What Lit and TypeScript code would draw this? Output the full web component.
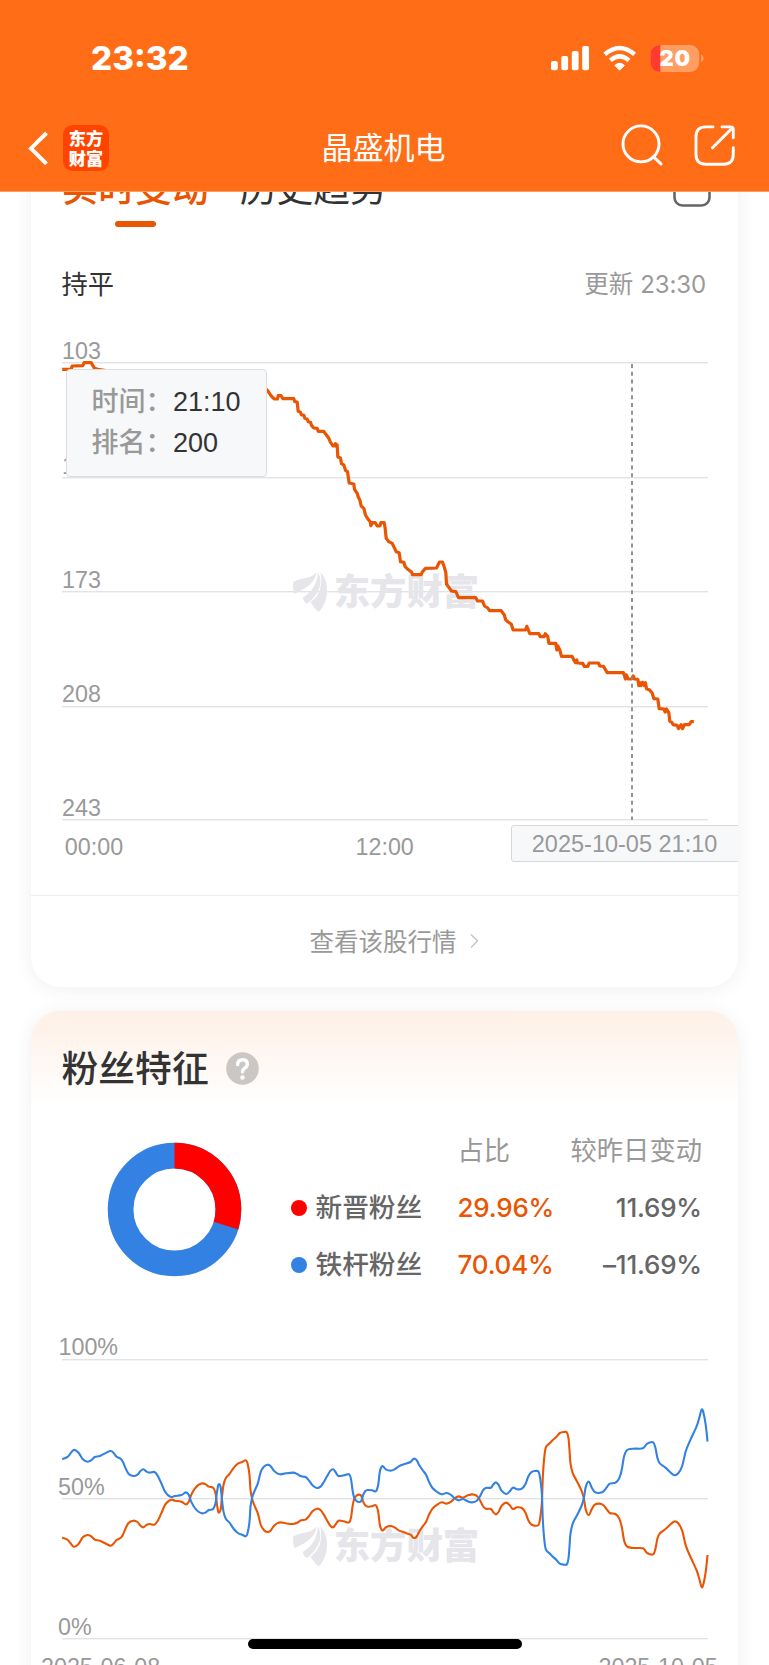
import { LitElement, html, css, svg } from "lit";
import { customElement } from "lit/decorators.js";

type Pt = [number, number];

/* Popularity rank through the day; three plot units per pixel. */
const rankStart: Pt[] = [
  [65,118],[92,118],[95,108],[127,107],[131,98],[152,98],[162,115],[172,118],[250,130],[500,160],[670,170],
  [683,184],[690,195],[697,203],[702,207],[711,207],[713,197],[722,197],[727,206],[760,206],[763,215],[770,216],
  [773,244],[780,247],[782,254],[790,256],[793,265],[800,267],[803,275],[810,277],[813,286],[820,294],[830,295],
  [833,304],[850,304],[856,313],[865,325],[870,337],[878,348],[882,348],[885,341],[890,345],[892,381],[900,384],
  [903,401],[910,405],[915,421],[921,425],[926,459],[940,462],[942,478],[950,490],[953,500],[958,510],[962,528],
  [970,535],[975,555],[983,568],[989,575],[991,587],[996,578],[1004,578],[1010,588],[1018,588],[1021,578],
  [1031,578],[1034,595],[1037,625],[1045,635],[1055,640],[1060,650],[1067,665],[1076,668],
].map(([x, y]) => [x + 120, y + 990] as Pt);

const rankEnd: Pt[] = [
  [0,65],[10,67],[14,80],[22,88],[33,96],[36,104],[62,104],[66,95],[75,85],[108,84],[117,66],[126,66],[131,80],
  [136,98],[138,132],[145,142],[153,153],[166,155],[174,173],[226,173],[231,183],[246,183],[252,198],[262,204],
  [267,212],[302,212],[311,224],[316,240],[323,246],[332,252],[338,270],[375,270],[379,259],[388,281],[415,281],
  [419,290],[431,290],[434,281],[442,290],[445,310],[466,310],[469,330],[472,318],[478,330],[483,349],[515,349],
  [519,358],[525,368],[529,360],[531,369],[547,370],[551,379],[562,379],[566,369],[594,369],[598,378],[609,379],
  [620,398],[669,398],[675,417],[678,405],[683,417],[693,417],[698,408],[702,417],[712,418],[715,437],[719,428],
  [722,437],[726,427],[732,437],[735,428],[738,446],[746,449],[755,459],[760,476],[772,477],[776,506],[790,507],
  [794,516],[798,507],[805,518],[808,544],[814,547],[818,554],[830,556],[834,566],[842,554],[846,566],[852,554],
  [866,554],[872,545],[880,545],
].map(([x, y]) => [x + 1200, y + 1620] as Pt);

const rankPoints = [...rankStart, ...rankEnd].map(([x, y]) => `${x / 3},${(y / 3).toFixed(2)}`).join(" ");

/* Share of loyal fans as a deviation from 50%; new fans are its mirror. */
const share: Pt[] = [
  [185,118],[202,125],[219,145],[234,137],[247,117],[261,110],[272,114],[283,124],[300,128],[329,142],[340,135],
  [348,125],[360,119],[367,110],[374,93],[384,74],[398,67],[411,71],[420,82],[429,87],[438,80],[448,77],[462,79],
  [472,67],[482,46],[493,21],[503,9],[513,4],[523,7],[543,10],[556,18],[565,10],[572,-10],[583,-29],[595,-41],
  [606,-45],[616,-42],[625,-35],[638,-32],[645,-15],[649,15],[653,39],[657,42],[661,31],[664,0],[669,-40],
  [676,-61],[687,-73],[700,-92],[712,-104],[725,-109],[736,-114],[741,-105],[747,-70],[750,-25],[755,2],[762,22],
  [772,45],[781,80],[790,95],[801,101],[810,97],[820,83],[830,75],[840,72],[856,75],[878,77],[890,73],[902,66],
  [915,64],[925,54],[936,39],[949,31],[960,35],[970,49],[980,67],[990,83],[998,87],[1005,79],[1014,67],[1030,69],
  [1046,72],[1052,55],[1056,25],[1061,2],[1068,-8],[1075,-11],[1082,-8],[1088,10],[1094,21],[1102,25],[1115,24],
  [1126,21],[1133,40],[1138,80],[1143,94],[1148,96],[1156,87],[1170,83],[1182,87],[1195,96],[1210,102],
  [1230,109],[1237,117],[1243,119],[1249,114],[1256,100],[1266,85],[1277,70],[1286,48],[1296,31],[1310,19],
  [1324,12],[1338,16],[1352,10],[1363,-1],[1375,-6],[1387,-2],[1402,-9],[1415,-12],[1428,-8],[1438,5],[1447,23],
  [1456,31],[1471,32],[1478,41],[1486,48],[1494,41],[1503,23],[1517,13],[1528,21],[1537,32],[1550,27],[1564,29],
  [1575,43],[1583,65],[1592,78],[1603,82],[1614,80],[1619,60],[1624,15],[1627,-65],[1631,-120],[1636,-153],
  [1646,-164],[1657,-175],[1668,-185],[1678,-196],[1690,-199],[1699,-198],[1704,-180],[1707,-145],[1710,-105],
  [1717,-75],[1730,-50],[1743,-23],[1750,0],[1756,35],[1765,50],[1774,32],[1783,19],[1796,16],[1808,20],
  [1818,32],[1828,44],[1845,47],[1856,60],[1864,87],[1871,127],[1880,145],[1900,149],[1927,150],[1940,164],
  [1958,168],[1965,150],[1971,120],[1978,105],[1995,92],[2020,70],[2033,75],[2045,97],[2056,142],[2070,176],
  [2088,215],[2096,240],[2104,267],[2111,247],[2117,210],[2121,170],
];

function smooth(sign: 1 | -1): string {
  const p = share.map(([x, v]) => [x / 3, (4495 - sign * v) / 3] as Pt);
  let d = `M${p[0][0]},${p[0][1]}`;
  for (let i = 0; i < p.length - 1; i++) {
    const a = p[Math.max(i - 1, 0)], b = p[i], c = p[i + 1], e = p[Math.min(i + 2, p.length - 1)];
    const k = 1 / 6;
    const n = [b[0] + (c[0] - a[0]) * k, b[1] + (c[1] - a[1]) * k, c[0] - (e[0] - b[0]) * k, c[1] - (e[1] - b[1]) * k, c[0], c[1]];
    d += "C" + n.map((v) => v.toFixed(2)).join(",");
  }
  return d;
}

const watermark = (y: number) => svg`
  <g transform="translate(280 ${y})" fill="#e5e5ea">
    <g transform="scale(.33333) translate(0 -378)">
      <path d="M38,410 C60,394 92,402 107,380 C106,408 84,424 42,445 C38,436 37,424 38,410Z"/>
      <path d="M67,456 C94,440 112,412 112,378 C128,408 120,442 80,474 C72,470 68,464 67,456Z"/>
      <path d="M120,380 C149,410 145,468 115,499 C105,492 96,480 90,470 C118,450 127,420 120,380Z"/>
    </g>
    <text x="53.2" y="33.2" class="mark">东方财富</text>
  </g>`;

const grid = (ys: number[]) =>
  ys.map((y) => svg`<rect x="61.5" y=${y} width="646" height="1.4" fill="#e3e3e3"/>`);

@customElement("status-header")
class StatusHeader extends LitElement {
  static styles = css`
    :host { display: block; height: 192px; flex: none; background: #ff6d17; color: #fff; position: relative; z-index: 2;
      border-bottom: 1px solid #ff9d63; box-sizing: border-box; font-family: Inter, "Noto Sans CJK SC", sans-serif; }
    .status { display: flex; align-items: center; height: 115px; box-sizing: border-box; padding: 0 64px 0 91px; }
    .time { font-size: 33.2px; font-weight: 800; flex: 1; line-height: 40px; }
    svg { display: block; flex: none; }
    .num { font: 900 22px Inter, sans-serif; }
    .nav { display: grid; grid-template-columns: 240px 1fr 240px; align-items: center; height: 66px; }
    .left { display: flex; align-items: center; padding-left: 28px; gap: 13px; }
    .logo { width: 46px; height: 46px; box-sizing: border-box; border-radius: 9.5px; background: #ff4400;
      font: 900 17.2px/19.8px "Noto Sans CJK SC", sans-serif; text-align: center; padding-top: 3.2px; }
    .title { text-align: center; font-size: 31px; line-height: 40px; margin-left: -2px; }
    .right { display: flex; justify-content: flex-end; padding-right: 32px; gap: 30px; }
  `;
  render() {
    return html`
      <div class="status">
        <div class="time">23:32</div>
        <svg width="156" height="30" viewBox="549 42 156 30">
          <g fill="#fff">
            <rect x="551" y="60" width="6.8" height="9.3" rx="2"/>
            <rect x="561.3" y="55" width="6.8" height="14.3" rx="2"/>
            <rect x="571.8" y="50" width="6.8" height="19.3" rx="2"/>
            <rect x="582.2" y="45" width="6.8" height="24.3" rx="2"/>
            <path d="M619.6,69.2 L614.9,64.4 Q619.6,60.2 624.4,64.4Z" stroke="#fff" stroke-width="1" stroke-linejoin="round"/>
          </g>
          <g fill="none" stroke="#fff" stroke-width="4.4">
            <path d="M604.8,53.4 Q619.6,40.6 634.6,53.4"/>
            <path d="M610.4,59.4 Q619.6,51.3 629,59.4"/>
          </g>
          <clipPath id="b"><rect x="650.5" y="44" width="48.7" height="27" rx="9"/></clipPath>
          <g clip-path="url(#b)">
            <rect x="650" y="44" width="50" height="27" fill="#ff9d63"/>
            <rect x="650" y="44" width="10.3" height="27" fill="#ff3b30"/>
          </g>
          <path d="M701,53.5 Q703.6,54.5 703.6,57.3 Q703.6,60 701,61Z" fill="#ff9d63"/>
          <text class="num" x="659.6" y="65.2" fill="#fff" textLength="30.6">20</text>
        </svg>
      </div>
      <div class="nav">
        <div class="left">
          <svg width="22" height="36" viewBox="28 130.500 22 36"><path d="M46.500,133.500 L31,148.900 L46.500,164.300" fill="none" stroke="#fff" stroke-width="3.900"/></svg>
          <div class="logo">东方<br>财富</div>
        </div>
        <div class="title">晶盛机电</div>
        <div class="right">
          <svg width="42" height="52" viewBox="621 121.800 42 52" fill="none" stroke="#fff" stroke-width="2.900" stroke-linecap="round">
            <circle cx="641" cy="143.700" r="18"/><path d="M653.600,156.700 L661,163.700"/>
          </svg>
          <svg width="44" height="52" viewBox="693 121.800 44 52" fill="none" stroke="#fff" stroke-width="2.900" stroke-linecap="round" stroke-linejoin="round">
            <path d="M713,126.700 H706 Q696,126.700 696,136.500 V154 Q696,164 706,164 H723.500 Q733.300,164 733.300,154 V147.500"/>
            <path d="M722,126.700 H730.500 Q733.300,126.700 733.300,129.500 V137.500 M732,128 L712.500,147.500"/>
          </svg>
        </div>
      </div>`;
  }
}

@customElement("rank-card")
class RankCard extends LitElement {
  static styles = css`
    :host { display: block; background: #fff; border-radius: 30px; overflow: hidden; position: relative; color: #333; }
    .tabs { display: flex; padding: 24px 27px 0 31px; height: 64px; gap: 31px; font-size: 36.800px; line-height: 50px; }
    .tab { display: flex; flex-direction: column; align-items: center; }
    .on { color: #ea5504; font-weight: 500; }
    .on::after { content: ""; width: 41px; height: 6.500px; border-radius: 3.300px; background: #ea5504; margin-top: 6.500px; }
    .share { margin-left: auto; }
    .meta { display: flex; justify-content: space-between; margin: 37px 31.500px 0 31px; height: 40px; line-height: 40px; font-size: 26.300px; }
    .upd { color: #999; font-size: 24.500px; margin-top: -1.500px; }
    .n { font-size: 24px; letter-spacing: -.1px; }
    .chart { position: relative; height: 590px; }
    svg { display: block; }
    text { font: 23.300px "Liberation Sans", Arial, sans-serif; fill: #999; }
    text.mark { font: 900 36.400px "Noto Sans CJK SC", sans-serif; fill: #e5e5ea; }
    .tip { position: absolute; left: 35.500px; top: 64px; width: 200.500px; height: 108px; box-sizing: border-box; border: 1.400px solid #ddd;
      border-radius: 4px; background: #f7f8fa; padding: 12px 0 0 24.500px; font: 27px/41px "Liberation Sans", "Noto Sans CJK SC", sans-serif; color: #333; }
    .row { display: flex; }
    .k { width: 81.500px; color: #999; font-weight: 500; white-space: nowrap; }
    .tag { position: absolute; right: -6px; top: 520px; width: 232.500px; height: 36.500px; box-sizing: border-box; border: 1.400px solid #d8d8d8;
      border-radius: 3px; background: #f7f8fa; padding-left: 19.800px; color: #999; font: 23.500px/36px "Liberation Sans", sans-serif; }
    .more { border-top: 1.400px solid #eee; height: 92px; display: flex; align-items: center; justify-content: center; gap: 13px;
      color: #999; font-size: 24.500px; padding: 0 0 3px 20px; box-sizing: border-box; }
    .more svg { margin-top: 1px; }
  `;
  render() {
    return html`
      <div class="tabs">
        <div class="tab on">实时变动</div>
        <div class="tab">历史趋势</div>
        <svg class="share" width="38" height="44" viewBox="673 164 38 44" fill="none" stroke="#666" stroke-width="2.600">
          <rect x="674.500" y="170" width="35" height="35.500" rx="8"/>
        </svg>
      </div>
      <div class="meta"><span>持平</span><span class="upd">更新 <span class="n">23:30</span></span></div>
      <div class="chart">
        <svg width="707" height="590" viewBox="30.500 305 707 590">
          ${grid([362, 477, 591, 706, 819])}
          ${watermark(571.7)}
          <polyline points=${rankPoints} fill="none" stroke="#ea5504" stroke-width="3.200" stroke-linejoin="round"/>
          <path d="M631.500,362 V820" stroke="#888" stroke-width="1.800" stroke-dasharray="4 3.800" stroke-dashoffset="-2"/>
          <text x="61.500" y="359.300">103</text>
          <text x="61.500" y="473.600">138</text>
          <text x="61.500" y="587.500">173</text>
          <text x="61.500" y="702">208</text>
          <text x="61.500" y="815.800">243</text>
          <text x="64.300" y="855.300">00:00</text>
          <text x="355" y="855.300">12:00</text>
        </svg>
        <div class="tip">
          <div class="row"><span class="k">时间：</span><span>21:10</span></div>
          <div class="row"><span class="k">排名：</span><span>200</span></div>
        </div>
        <div class="tag">2025-10-05 21:10</div>
      </div>
      <div class="more">查看该股行情
        <svg width="9" height="14" viewBox="0 0 9 14"><path d="M1,.500 L7.500,7 L1,13.500" fill="none" stroke="#c4c4c4" stroke-width="1.400"/></svg>
      </div>`;
  }
}

@customElement("fans-card")
class FansCard extends LitElement {
  static styles = css`
    :host { display: block; background: linear-gradient(#fef0e6, #fff 97px) #fff; border-radius: 30px 30px 0 0; color: #333; height: 700px; }
    .head { display: flex; align-items: center; gap: 17px; height: 110px; padding: 0 31px 1px; box-sizing: border-box; font-size: 36.800px; font-weight: 500; }
    .head svg { margin-top: 5px; }
    svg { display: block; }
    .body { display: flex; height: 172px; padding-left: 76.500px; }
    .donut { margin: 21px 48.500px 0 0; flex: none; }
    .table { display: grid; grid-template-columns: 167px 112px 132.500px; grid-template-rows: 57.500px 56.800px 56.800px; align-items: center; font-size: 26px; color: #666; }
    .h { color: #999; font-size: 26.300px; margin-top: -2px; }
    .r { text-align: right; white-space: nowrap; }
    .name { display: flex; align-items: center; gap: 9px; font-weight: 500; font-size: 26.700px; margin-top: -2px; }
    .dot { width: 16px; height: 16px; border-radius: 50%; background: #f00; margin-top: 5px; }
    .blue { background: #3381e3; }
    .v { font-weight: 500; letter-spacing: -.2px; margin-top: 1px; }
    .hot { color: #ea5504; }
    text { font: 23.300px "Liberation Sans", Arial, sans-serif; fill: #999; }
    text.mark { font: 900 36.400px "Noto Sans CJK SC", sans-serif; fill: #e5e5ea; }
  `;
  render() {
    const r = 53.9, len = 2 * Math.PI * r;
    return html`
      <div class="head">粉丝特征
        <svg width="33" height="33" viewBox="0 0 33 33">
          <circle cx="16.500" cy="16.500" r="16.300" fill="#cbc7c4"/>
          <path d="M11.600,12.600 Q11.900,7.700 16.600,7.700 Q21.300,7.700 21.300,12 Q21.300,14.400 18.700,16.200 Q16.500,17.700 16.500,20" fill="none" stroke="#fff" stroke-width="3.400" stroke-linecap="round"/>
          <circle cx="16.500" cy="25.500" r="2.200" fill="#fff"/>
        </svg>
      </div>
      <div class="body">
        <svg class="donut" width="135" height="135" viewBox="-67.500 -67.500 135 135" fill="none" stroke-width="25.700">
          <circle r=${r} stroke="#3381e3"/>
          <circle r=${r} stroke="#f00" transform="rotate(-90)" stroke-dasharray="${len * 0.298} ${len}"/>
        </svg>
        <div class="table">
          <span></span><span class="h">占比</span><span class="h r">较昨日变动</span>
          <span class="name"><i class="dot"></i>新晋粉丝</span><span class="v hot">29.96%</span><span class="v r">11.69%</span>
          <span class="name"><i class="dot blue"></i>铁杆粉丝</span><span class="v hot">70.04%</span><span class="v r">–11.69%</span>
        </div>
      </div>
      <svg width="707" height="400" viewBox="30.500 1293 707 400">
        ${grid([1359, 1498, 1638])}
        ${watermark(1526)}
        <path d=${smooth(-1)} fill="none" stroke="#ea5504" stroke-width="2.100"/>
        <path d=${smooth(1)} fill="none" stroke="#3381e3" stroke-width="2.100"/>
        <text x="58" y="1354.700">100%</text>
        <text x="57.500" y="1494.700">50%</text>
        <text x="57.500" y="1634.700">0%</text>
        <text x="40.500" y="1674.700">2025-06-08</text>
        <text x="598" y="1674.700">2025-10-05</text>
      </svg>`;
  }
}

@customElement("app-root")
class AppRoot extends LitElement {
  static styles = css`
    :host { display: flex; flex-direction: column; position: relative; height: 1665px; overflow: hidden; background: #fff;
      font-family: Inter, "Noto Sans CJK SC", sans-serif; }
    .list { display: flex; flex-direction: column; gap: 24px; padding: 0 31.500px 0 30.500px; margin-top: -52px; }
    .card { box-shadow: 0 2px 20px rgba(0, 0, 0, .065); }
    .home { position: absolute; left: 247.500px; top: 1639px; width: 274px; height: 10px; border-radius: 5px; background: #000; z-index: 3; }
  `;
  render() {
    return html`
      <status-header></status-header>
      <div class="list">
        <rank-card class="card"></rank-card>
        <fans-card class="card"></fans-card>
      </div>
      <div class="home"></div>`;
  }
}
